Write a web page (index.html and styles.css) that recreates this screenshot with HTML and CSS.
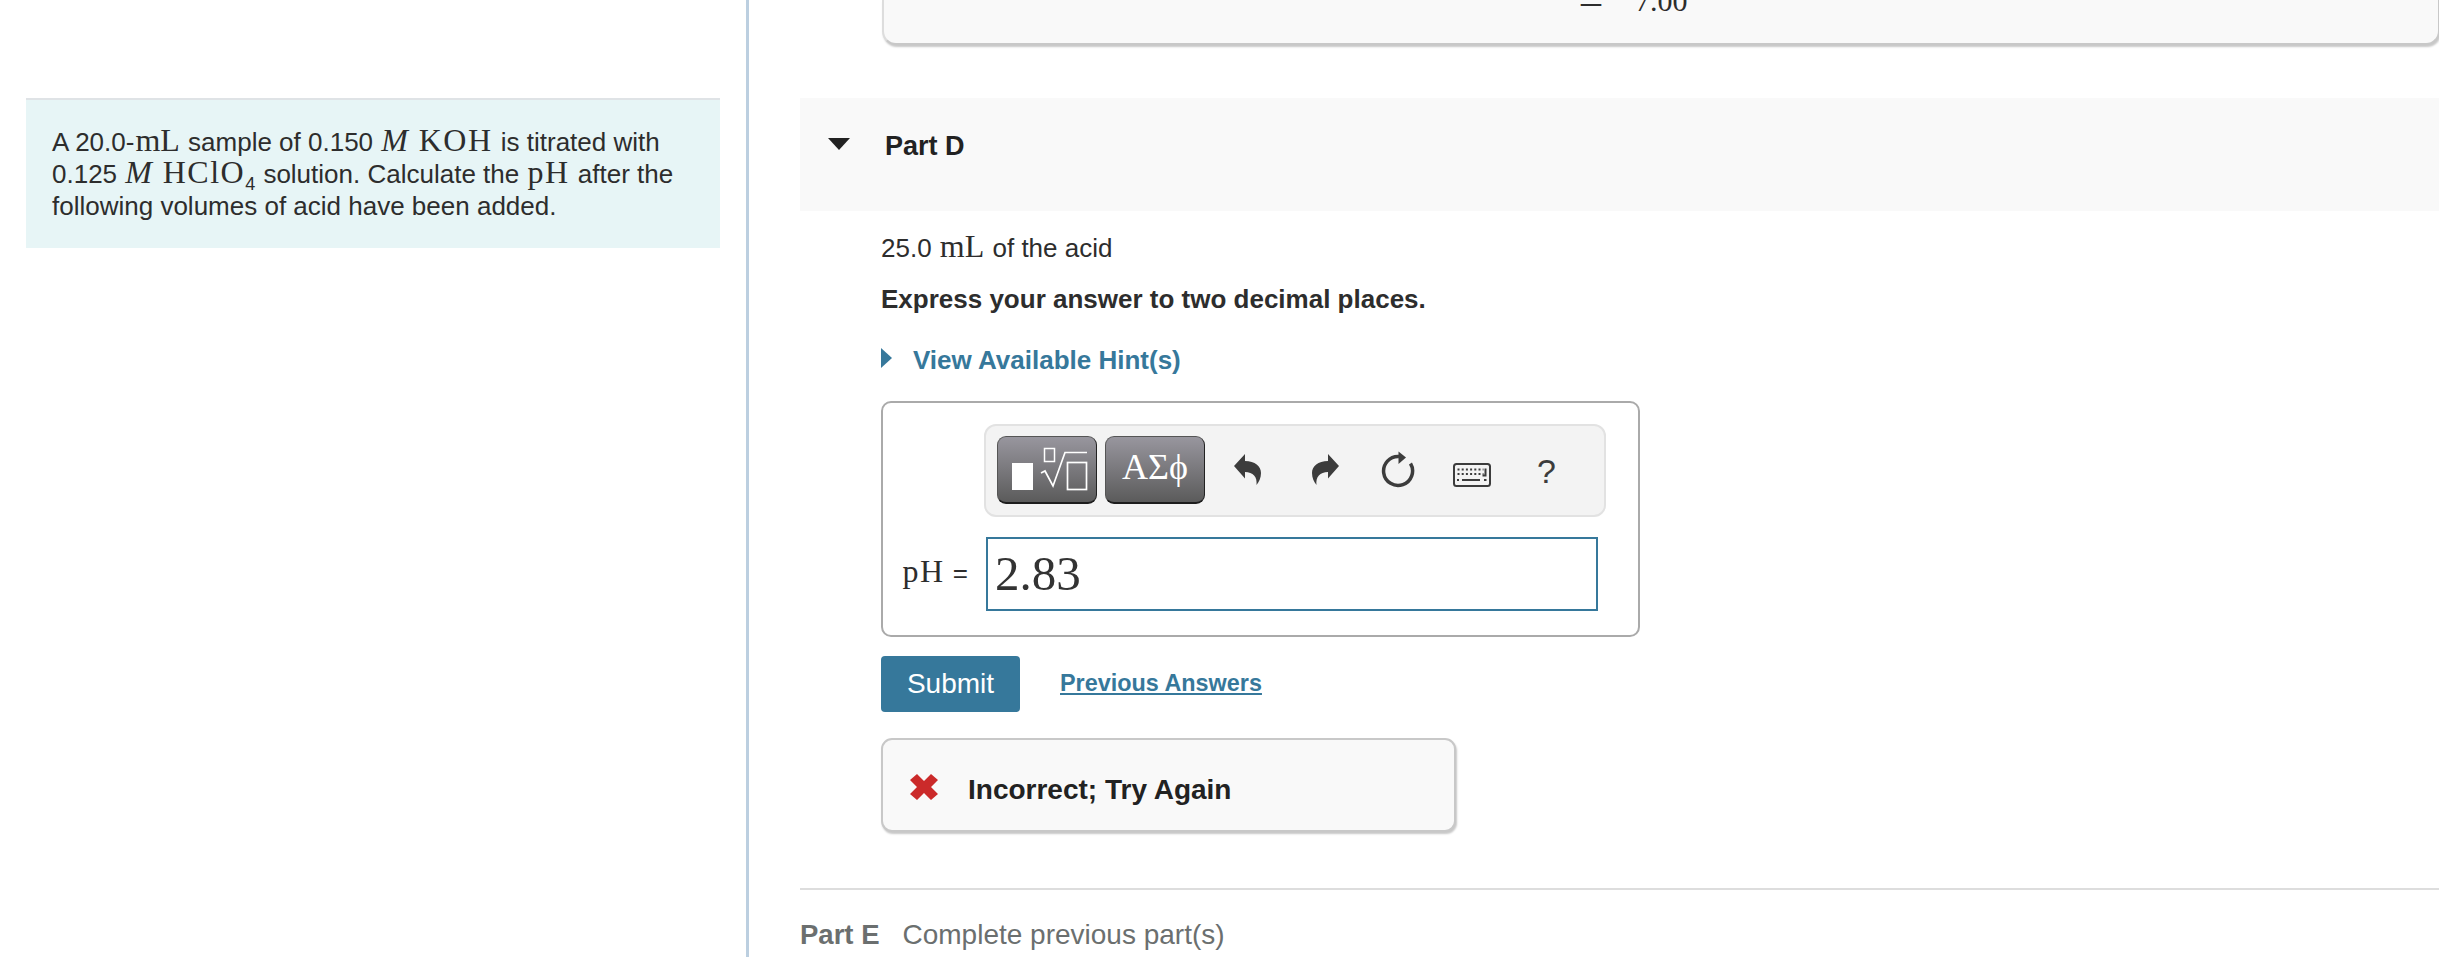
FILE: index.html
```html
<!DOCTYPE html>
<html>
<head>
	<meta charset="UTF-8">
	<title>Part D</title>
	<link rel="stylesheet" href="styles.css">
</head>
<body>
<div class="page">
	<div class="left">
		<div class="intro">
			A 20.0-<span class="math unit">mL</span> sample of 0.150 <span class="math it">M</span> <span class="math">KOH</span> is titrated with
			0.125 <span class="math it">M</span> <span class="math">HClO<sub>4</sub></span> solution. Calculate the <span class="math">pH</span> after the
			following volumes of acid have been added.
		</div>
	</div>
	<div class="right">
		<div class="prev-box">
			<span class="dash">&ndash;</span><span class="prev-val">7.00</span>
		</div>

		<div class="part-head">
			<span class="tri-down"></span>
			<span class="part-title">Part D</span>
		</div>

		<div class="part-body">
			<p class="q">25.0 <span class="math unit">mL</span> of the acid</p>
			<p class="q strong">Express your answer to two decimal places.</p>
			<div class="hint"><span class="tri-right"></span><span>View Available Hint(s)</span></div>

			<div class="answer">
				<div class="toolbar">
					<div class="tool-btn">
						<svg width="100" height="68" viewBox="0 0 100 68">
							<rect x="15" y="27" width="21" height="27" fill="#fff"/>
							<rect x="47.500" y="12.500" width="10" height="13" fill="none" stroke="#fff" stroke-width="1.500"/>
							<path d="M44 37l4-2 8 15 12-33.500h22" fill="none" stroke="#fff" stroke-width="1.700"/>
							<rect x="70.500" y="26.500" width="19" height="27" fill="none" stroke="#fff" stroke-width="1.700"/>
						</svg>
					</div>
					<div class="tool-btn greek">&Alpha;&Sigma;&#981;</div>
					<svg class="ico ico-undo" width="28" height="31" viewBox="0 0 28 31"><path d="M0 12L11 0v7c10 0 16 5 16 12 0 5-2 9-4.500 12 1-8-3.500-13-11.500-13v6.500z" fill="#3c3c3c"/></svg>
					<svg class="ico ico-redo" width="28" height="31" viewBox="0 0 28 31"><path d="M27 12L16 0v7C6 7 0 12 0 19c0 5 2 9 4.500 12-1-8 3.500-13 11.500-13v6.500z" fill="#3c3c3c"/></svg>
					<svg class="ico ico-reload" width="35" height="37" viewBox="0 0 35 37">
						<path d="M18 5.500A14.500 14.500 0 1 0 29.500 12.500" fill="none" stroke="#3c3c3c" stroke-width="3.500"/>
						<path d="M17.500 0.500l7.500 6-7.500 6.500z" fill="#3c3c3c"/>
					</svg>
					<svg class="ico ico-keys" width="38" height="24" viewBox="0 0 38 24">
						<rect x="1" y="1" width="36" height="22" rx="2.500" fill="#f3f3f3" stroke="#3c3c3c" stroke-width="2"/>
						<path d="M4.500 6.500h26M4.500 11h26" stroke="#3c3c3c" stroke-width="2" stroke-dasharray="2 2.200"/>
						<path d="M32.500 5.500v7h-3" fill="none" stroke="#3c3c3c" stroke-width="2"/>
						<path d="M4 17h2M9 17h18M31 17h2.500" stroke="#3c3c3c" stroke-width="2"/>
					</svg>
					<span class="help">?</span>
				</div>
				<div class="input-row">
					<label class="ph-label"><span class="math">pH</span> =</label>
					<div class="input">2.83</div>
				</div>
			</div>

			<div class="actions">
				<div class="submit">Submit</div>
				<a class="prev-link" href="#">Previous Answers</a>
			</div>

			<div class="alert">
				<svg class="x-mark" width="28" height="26" viewBox="0 0 28 26"><path d="M7 0l7 7 7-7 7 6-7 7 7 7-7 6-7-7-7 7-7-6 7-7-7-7z" fill="#cb2a2a"/></svg>
				<span class="alert-text">Incorrect; Try Again</span>
			</div>
		</div>

		<div class="part-next"><b>Part E</b><span>Complete previous part(s)</span></div>
	</div>
</div>
</body>
</html>
```

FILE: styles.css
```css
* {
	margin: 0;
	padding: 0;
	box-sizing: border-box;
}
html, body {
	height: 100%;
	overflow: hidden;
	background: #fff;
}
body {
	font: 26px/32px "Liberation Sans", Arial, sans-serif;
	color: #2d2d2d;
}
.page {
	display: grid;
	grid-template-columns: 749px 1fr;
	height: 957px;
	overflow: hidden;
}
.left {
	border-right: 3px solid #bccfe0;
	padding: 98px 26px 0;
}
.intro {
	background: #e7f5f6;
	border-top: 2px solid #dfe3e6;
	height: 150px;
	padding: 26px 26px 0;
}
.math {
	font-family: "Liberation Serif", "Times New Roman", serif;
	font-size: 32px;
	line-height: 0;
	letter-spacing: 1.500px;
	margin: 0 1px;
}
.math.it {
	font-style: italic;
}
.math.unit {
	letter-spacing: 0;
}
.math sub {
	font-family: "Liberation Sans", Arial, sans-serif;
	font-size: 18px;
	line-height: 0;
	letter-spacing: 0;
}
.right {
	padding: 0 1px 0 51px;
}

/* box of the part above, cut by the top of the window */
.prev-box {
	width: 1558px;
	height: 45px;
	margin-left: 82px;
	display: flex;
	align-items: flex-end;
	background: #f9f9f9;
	border: 2px solid #c8c8c8;
	border-top: 0;
	border-left-color: #ddd;
	border-radius: 0 0 14px 14px;
	box-shadow: 1px 2px 2px #c8c8c8;
	font: 30px/32px "Liberation Serif", serif;
	overflow: hidden;
	padding: 0 0 26px 697px;
}
.dash {
	width: 54px;
	font-size: 40px;
}
.part-head {
	margin-top: 53px;
	height: 113px;
	background: #f9f9f9;
	display: flex;
	padding: 30px 0 0 28px;
}
.tri-down {
	width: 0;
	height: 0;
	margin-top: 10px;
	border-left: 11px solid transparent;
	border-right: 11px solid transparent;
	border-top: 12px solid #222;
}
.part-title {
	margin: 2px 0 0 35px;
	font-weight: bold;
	font-size: 27px;
	color: #222;
}
.part-body {
	padding-left: 81px;
}
.q {
	margin-top: 19px;
}
.part-head + .part-body .q:first-child {
	margin-top: 21px;
}
.strong {
	font-weight: bold;
}
.hint {
	margin-top: 29px;
	display: flex;
	font-weight: bold;
	color: #36789b;
}
.tri-right {
	width: 0;
	height: 0;
	margin: 4px 21px 0 0;
	border-top: 10px solid transparent;
	border-bottom: 10px solid transparent;
	border-left: 11px solid #36789b;
}
.answer {
	width: 759px;
	height: 236px;
	margin-top: 25px;
	border: 2px solid #aaa;
	border-radius: 10px;
	padding: 21px 0 0 101px;
}
.toolbar {
	width: 622px;
	height: 93px;
	display: flex;
	align-items: flex-start;
	background: #f3f3f3;
	border: 2px solid #e2e2e2;
	border-radius: 12px;
	padding: 10px 0 0 11px;
}
.tool-btn {
	width: 100px;
	height: 68px;
	margin-right: 8px;
	background: linear-gradient(#98969e, #5b5b5b);
	border: 1px solid #555;
	border-right-color: #222;
	border-bottom: 2px solid #1d1d1d;
	border-radius: 9px;
	overflow: hidden;
}
.tool-btn svg {
	display: block;
	margin: -1px;
}
.greek {
	text-align: center;
	font: 36px/60px "Liberation Serif", serif;
	color: #fff;
}
.ico {
	flex: none;
}
.ico-undo {
	margin: 18px 0 0 21px;
}
.ico-redo {
	margin: 18px 0 0 50px;
}
.ico-reload {
	margin: 15px 0 0 41px;
}
.ico-keys {
	margin: 27px 0 0 37px;
}
.help {
	margin: 15px 0 0 46px;
	font-size: 34px;
	line-height: 40px;
	color: #3c3c3c;
}
.input-row {
	display: flex;
	align-items: center;
	margin: 20px 0 0 -101px;
}
.ph-label {
	width: 103px;
	padding: 0 18px 3px 0;
	text-align: right;
	white-space: nowrap;
}
.input {
	width: 612px;
	height: 74px;
	border: 2px solid #36789b;
	padding-left: 7px;
	font: 49px/70px "Liberation Serif", serif;
	color: #333;
}
.actions {
	display: flex;
	align-items: center;
	margin-top: 19px;
}
.submit {
	width: 139px;
	height: 56px;
	background: #36789b;
	border-radius: 4px;
	color: #fff;
	text-align: center;
	font-size: 28px;
	line-height: 56px;
}
.prev-link {
	margin-left: 40px;
	font-weight: bold;
	font-size: 23.400px;
	color: #36789b;
	position: relative;
	top: -1px;
}
.alert {
	width: 575px;
	height: 94px;
	margin-top: 26px;
	display: flex;
	align-items: center;
	background: #f9f9f9;
	border: 2px solid #c8c8c8;
	border-radius: 11px;
	box-shadow: 1px 2px 2px #c8c8c8;
	padding: 4px 0 0 27px;
	font-weight: bold;
	font-size: 28px;
	color: #222;
}
.alert-text {
	padding-top: 6px;
}
.x-mark {
	margin-right: 30px;
}
.part-next {
	margin-top: 56px;
	border-top: 2px solid #ddd;
	padding-top: 29px;
	color: #6b6f6f;
	font-size: 28px;
}
.part-next b {
	margin-right: 23px;
	font-size: 27.500px;
}
```
